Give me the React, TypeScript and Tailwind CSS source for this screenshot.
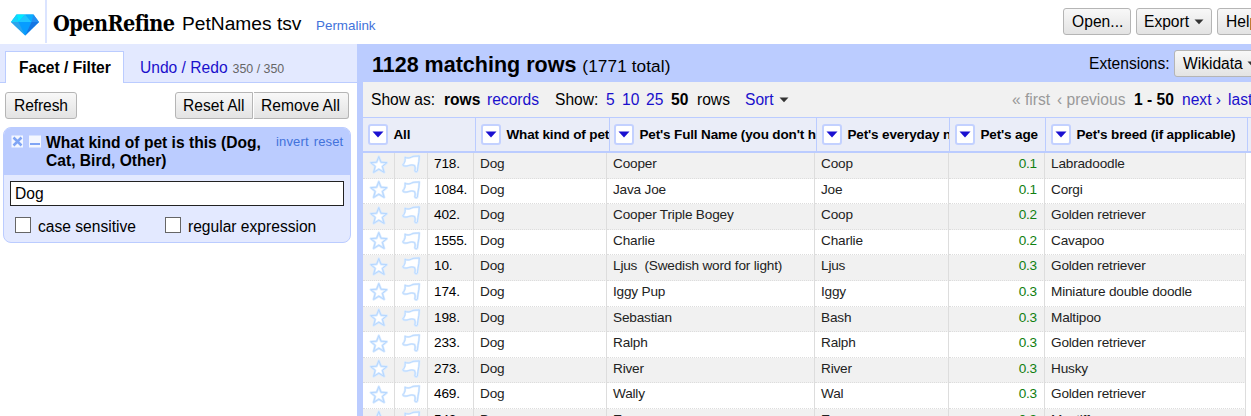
import type { ReactNode } from "react";

type Row = [string, string, string, string, string];

const rows: Row[] = [
  ["718.", "Cooper", "Coop", "0.1", "Labradoodle"],
  ["1084.", "Java Joe", "Joe", "0.1", "Corgi"],
  ["402.", "Cooper Triple Bogey", "Coop", "0.2", "Golden retriever"],
  ["1555.", "Charlie", "Charlie", "0.2", "Cavapoo"],
  ["10.", "Ljus  (Swedish word for light)", "Ljus", "0.3", "Golden retriever"],
  ["174.", "Iggy Pup", "Iggy", "0.3", "Miniature double doodle"],
  ["198.", "Sebastian", "Bash", "0.3", "Maltipoo"],
  ["233.", "Ralph", "Ralph", "0.3", "Golden retriever"],
  ["273.", "River", "River", "0.3", "Husky"],
  ["469.", "Wally", "Wal", "0.3", "Golden retriever"],
  ["542.", "Enzo", "Enzo", "0.3", "Mastiff"],
];

const columns = [
  { label: "All", width: "w-[113px]", gap: "pl-[5px]" },
  { label: "What kind of pet is this", width: "w-[134px]", gap: "pl-[5px]" },
  { label: "Pet's Full Name (you don't have to)", width: "w-[207px]", gap: "pl-1" },
  { label: "Pet's everyday name", width: "w-[133px]", gap: "pl-[5px]" },
  { label: "Pet's age", width: "w-[96px]", gap: "pl-[5px]" },
  { label: "Pet's breed (if applicable)", width: "w-[202px]", gap: "pl-[5px]" },
];

function Button({ children, className }: { children: ReactNode; className: string }) {
  return (
    <button
      className={`flex h-[27px] shrink-0 items-center whitespace-nowrap border border-[#b5b5b5] bg-linear-to-b from-[#f8f8f8] to-[#e3e3e3] leading-[18px] ${className}`}
    >
      {children}
    </button>
  );
}

function Caret() {
  return (
    <svg className="shrink-0" width="10" height="6" viewBox="0 0 10 6">
      <path d="M0.5 0.5h9L5 5.2z" fill="#333" />
    </svg>
  );
}

function Diamond() {
  return (
    <svg className="shrink-0" width="28" height="22" viewBox="0 0 28 22">
      <path d="M5.5 0.5h17L28 8 14.2 21.5 0 8z" fill="#14a8ff" />
      <path d="M5.5 0.5L0 8h7.5z" fill="#16d3fb" />
      <path d="M5.5 0.5h8.7L7.5 8z" fill="#00eaff" />
      <path d="M14.2 0.5L7.5 8h13z" fill="#20c4ff" />
      <path d="M14.2 0.5h8.3L20.5 8z" fill="#0aaeff" />
      <path d="M22.5 0.5L28 8h-7.5z" fill="#248df0" />
      <path d="M0 8h7.5l6.7 13.5z" fill="#2ba4ec" />
      <path d="M7.5 8h13l-6.3 13.5z" fill="#079cff" />
      <path d="M20.5 8H28L14.2 21.5z" fill="#1576e3" />
    </svg>
  );
}

function MenuButton() {
  return (
    <button className="flex h-[21px] w-[20px] shrink-0 items-center justify-center rounded-[3px] border-2 border-[#c3d1ff] bg-white">
      <svg width="12" height="7" viewBox="0 0 12 7">
        <path d="M0.5 0.5h11L6 6.5z" fill="#1a10d0" />
      </svg>
    </button>
  );
}

function Star() {
  return (
    <svg width="20" height="20" viewBox="0 0 20 20" fill="none">
      <path
        d="M9.8 1.6l2.2 5.6 5.9.4-4.5 3.8 1.8 6-5.4-3.2-5.2 3.2 1.6-6L1.7 7.6l5.9-.4z"
        fill="#fff"
        stroke="#d8eaff"
        strokeWidth="2.4"
        strokeLinejoin="round"
      />
      <path
        d="M9.8 1.6l2.2 5.6 5.9.4-4.5 3.8 1.8 6-5.4-3.2-5.2 3.2 1.6-6L1.7 7.6l5.9-.4z"
        stroke="#b5d7ff"
        strokeWidth="1"
        strokeLinejoin="round"
      />
    </svg>
  );
}

function Flag() {
  const outline =
    "M4 3.2C6 4.2 8.4 4.2 10.4 3.1C12.6 1.8 15 2.4 18.3 1.9L17.9 7.2L17 12.2L16.4 17C15.9 18.2 14.2 18.2 13.8 17L14.2 14L13.6 11.6C11.6 10.6 9.4 10.9 7.2 11.7C5.6 12.3 4 12.2 2.3 11.6C1.4 11.2 2 10.3 2.9 9.4C4.1 7.8 4.4 5.8 4 3.2Z";
  return (
    <svg width="20" height="20" viewBox="0 0 20 20" fill="none">
      <path d={outline} fill="#fff" stroke="#dcecff" strokeWidth="2.2" strokeLinejoin="round" />
      <path d={outline} stroke="#b5d7ff" strokeWidth="0.9" strokeLinejoin="round" />
    </svg>
  );
}

function Header() {
  return (
    <header className="flex h-11 shrink-0 items-start overflow-hidden bg-white">
      <div className="flex h-[43px] w-[47px] shrink-0 border-r-2 border-[#dbe4ff] pl-[11px] pt-[14px]">
        <Diamond />
      </div>
      <div className="w-[135px] shrink-0 pl-[6px] pt-[7px]">
        <div className="w-max origin-left scale-x-[0.935] whitespace-nowrap font-['DejaVu_Serif_Condensed','DejaVu_Serif',serif] text-[23px] font-bold leading-[32px] tracking-[-0.6px]">
          OpenRefine
        </div>
      </div>
      <div className="w-[134px] shrink-0 whitespace-nowrap pt-[12px] text-[19.2px] leading-6">PetNames tsv</div>
      <a className="shrink-0 pt-[16px] text-[13.4px] leading-[20px] text-[#4272db]">Permalink</a>
      <div className="ml-auto flex w-[188px] shrink-0 gap-[5px] pt-2">
        <Button className="w-[68px] rounded-[3px] pl-2 tracking-[0.05px]">Open...</Button>
        <Button className="w-[76px] gap-[5px] rounded-[3px] pl-[7px]">
          Export <Caret />
        </Button>
        <Button className="w-[70px] rounded-[3px] pl-2">Help</Button>
      </div>
    </header>
  );
}

function Sidebar() {
  return (
    <aside className="flex w-[357px] shrink-0 flex-col">
      <div className="flex h-[39px] border-b border-[#bbccff] bg-[#e3e9ff] pl-[5px] pt-[7px]">
        <div className="h-8 w-[119px] shrink-0 border border-b-0 border-[#bbccff] bg-white pl-[13px] pt-[6px] font-bold leading-5">
          Facet / Filter
        </div>
        <div className="flex items-baseline gap-[5px] whitespace-nowrap pl-4 pt-[7px] leading-5 text-[#1a10cc]">
          Undo / Redo
          <span className="text-[12.4px] text-[#666]">350 / 350</span>
        </div>
      </div>
      <div className="flex pl-[5px] pt-[9px]">
        <Button className="w-[72px] rounded-[3px] pl-2 tracking-[-0.1px]">Refresh</Button>
        <Button className="ml-[98px] w-[78px] rounded-l-[3px] pl-[7px]">Reset All</Button>
        <Button className="ml-px w-[95px] rounded-r-[3px] border-l-0 pl-[7px]">Remove All</Button>
      </div>
      <section className="ml-[3px] mt-2 h-[116px] w-[348px] overflow-hidden rounded-[8px] border border-[#bbccff] bg-[#e3e9ff]">
        <div className="flex h-[47px] bg-[#bbccff] pl-[7px] pt-[7px]">
          <svg className="shrink-0" width="31" height="14" viewBox="0 0 31 14">
            <path d="M0.5 0.5h11.5v12H0.5zM18 0.5h12v12H18z" fill="#f4f7ff" />
            <path d="M2.5 2.5l8 8M10.5 2.5l-8 8" stroke="#80a5f5" strokeWidth="2.5" />
            <path d="M19 9h10" stroke="#80a5f5" strokeWidth="2" />
          </svg>
          <h3 className="ml-1 mt-[-1px] w-[224px] shrink-0 font-bold leading-[18px]">
            What kind of pet is this (Dog,
            <br />
            Cat, Bird, Other)
          </h3>
          <div className="ml-[6px] mt-[-1px] flex gap-[5px] text-[13px] leading-4 tracking-[0.15px] text-[#4272db]">
            <a>invert</a>
            <a>reset</a>
          </div>
        </div>
        <input
          className="ml-[6px] mt-[6px] block h-[25px] w-[334px] border border-[#222] bg-white px-1 outline-none"
          defaultValue="Dog"
        />
        <div className="mt-[11px] flex h-[18px] items-start pl-[11px]">
          <span className="size-4 shrink-0 border border-[#666] bg-white" />
          <label className="w-[127px] shrink-0 pl-[7px] pt-px leading-[18px]">case sensitive</label>
          <span className="ml-[7px] size-4 shrink-0 border border-[#666] bg-white" />
          <label className="whitespace-nowrap pl-[7px] pt-px leading-[18px]">regular expression</label>
        </div>
      </section>
    </aside>
  );
}

function Toolbar() {
  return (
    <>
      <div className="flex h-[38px] shrink-0 items-start overflow-hidden bg-[#bbccff] pl-[9px]">
        <h2 className="shrink-0 whitespace-nowrap pt-[7px] text-[21.5px] font-bold leading-7">1128 matching rows</h2>
        <span className="shrink-0 whitespace-nowrap pl-[6px] pt-[10px] text-[17.2px] leading-6 tracking-[0.1px]">
          (1771 total)
        </span>
        <div className="ml-auto flex w-[162px] shrink-0 pt-[6px]">
          <span className="w-[85px] shrink-0 pt-[5px] leading-[18px]">Extensions:</span>
          <Button className="w-[90px] gap-[4px] rounded-[3px] pl-2">
            Wikidata <Caret />
          </Button>
        </div>
      </div>
      <div className="flex h-[35px] shrink-0 items-center overflow-hidden whitespace-nowrap bg-[#f1f1f1] pl-2 leading-5 text-[#1a10cc]">
        <span className="w-[73px] shrink-0 text-black">Show as:</span>
        <b className="w-[43px] shrink-0 text-black">rows</b>
        <span className="w-[68px] shrink-0">records</span>
        <span className="w-[51px] shrink-0 text-black">Show:</span>
        <span className="w-4 shrink-0">5</span>
        <span className="w-6 shrink-0">10</span>
        <span className="w-[25px] shrink-0">25</span>
        <b className="w-[26px] shrink-0 text-black">50</b>
        <span className="w-[48px] shrink-0 text-black">rows</span>
        <span className="flex shrink-0 items-center gap-[5px]">
          Sort <Caret />
        </span>
        <div className="ml-auto flex w-[239px] shrink-0">
          <span className="w-[45px] shrink-0 text-[#999]">« first</span>
          <span className="w-[77px] shrink-0 text-[#999]">‹ previous</span>
          <b className="w-[48px] shrink-0 text-black">1 - 50</b>
          <span className="w-[46px] shrink-0">next ›</span>
          <span className="shrink-0">last »</span>
        </div>
      </div>
    </>
  );
}

function Grid() {
  return (
    <>
      <div className="flex h-9 w-[888px] shrink-0 overflow-hidden border-b-2 border-t border-[#bbccff] bg-[#eaedf8]">
        {columns.map((c) => (
          <div
            key={c.label}
            className={`flex shrink-0 items-center overflow-hidden whitespace-nowrap border-r border-[#bbccff] text-[13.5px] font-bold tracking-[-0.15px] ${c.width} ${c.gap}`}
          >
            <MenuButton />
            <span className="pl-[5.5px] pt-[2px]">{c.label}</span>
          </div>
        ))}
      </div>
      <div className="shrink-0 whitespace-pre text-[13.6px] leading-[20px] tracking-[-0.18px] text-[#222]">
        {rows.map((r) => (
          <div
            key={r[0]}
            className="flex h-[25.6px] w-[883px] *:shrink-0 *:border-b *:border-r *:border-b-[#dddddd] *:border-r-[#dddddd] *:[border-bottom-style:dotted] odd:bg-[#f1f1f1]"
          >
            <div className="w-8 pl-[6px] pt-[1.5px]">
              <Star />
            </div>
            <div className="w-[33px] pl-[6px] pt-[1px]">
              <Flag />
            </div>
            <div className="w-[46px] pl-[6px] pt-px text-black">{r[0]}</div>
            <div className="w-[133px] pl-[6px] pt-px">Dog</div>
            <div className="w-[208px] pl-[6px] pt-px">{r[1]}</div>
            <div className="w-[134px] pl-[6px] pt-px">{r[2]}</div>
            <div className="w-[96px] pr-[7px] pt-px text-right text-[#118011]">{r[3]}</div>
            <div className="w-[201px] pl-[6px] pt-px">{r[4]}</div>
          </div>
        ))}
      </div>
    </>
  );
}

export default function App() {
  return (
    <div className="flex h-[416px] w-[1251px] flex-col overflow-hidden bg-white font-['Liberation_Sans',Arial,sans-serif] text-[15.6px] text-black">
      <Header />
      <div className="flex min-h-0 flex-1">
        <Sidebar />
        <main className="flex min-w-0 flex-1 flex-col overflow-hidden border-l-[6px] border-[#bbccff]">
          <Toolbar />
          <Grid />
        </main>
      </div>
    </div>
  );
}
